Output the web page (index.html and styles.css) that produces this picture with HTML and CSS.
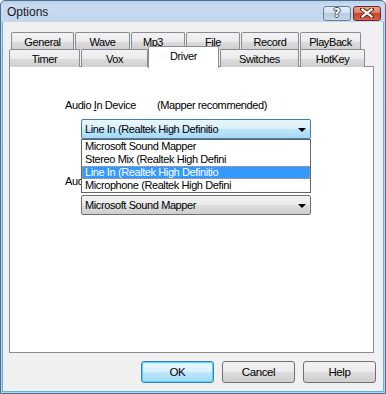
FILE: index.html
```html
<!DOCTYPE html>
<html>
<head>
<meta charset="utf-8">
<link rel="stylesheet" href="styles.css">
</head>
<body>
<div class="window">
  <div class="titlebar">
    <span class="title">Options</span>
    <div class="tb-buttons">
      <div class="tb-btn tb-help"><span class="q">?</span></div>
      <div class="tb-btn tb-close">
        <svg width="14" height="10" viewBox="0 0 14 10">
          <path d="M2 1 L12 9 M12 1 L2 9" stroke="#5a2a20" stroke-width="4" stroke-linecap="square"/>
          <path d="M2.5 1.5 L11.5 8.5 M11.5 1.5 L2.5 8.5" stroke="#ffffff" stroke-width="2.2" stroke-linecap="square"/>
        </svg>
      </div>
    </div>
  </div>
  <div class="client">
    <div class="tabs">
      <div class="tabrow back">
        <div class="tab w-general">General</div>
        <div class="tab w-wave">Wave</div>
        <div class="tab w-mp3">Mp3</div>
        <div class="tab w-file">File</div>
        <div class="tab w-record">Record</div>
        <div class="tab w-playback">PlayBack</div>
      </div>
      <div class="tabrow front">
        <div class="tab w-timer">Timer</div>
        <div class="tab w-vox">Vox</div>
        <div class="tab selected w-driver">Driver</div>
        <div class="tab w-switches">Switches</div>
        <div class="tab w-hotkey">HotKey</div>
      </div>
    </div>
    <div class="panel">
      <div class="field">
        <div class="label"><span class="lbl-main">Audio <u>I</u>n Device</span><span class="hint">(Mapper recommended)</span></div>
        <div class="combo-wrap">
          <div class="combo hot"><span class="combo-text">Line In (Realtek High Definitio</span><span class="arrow"></span></div>
          <ul class="dropdown">
            <li>Microsoft Sound Mapper</li>
            <li>Stereo Mix (Realtek High Defini</li>
            <li class="sel">Line In (Realtek High Definitio</li>
            <li>Microphone (Realtek High Defini</li>
          </ul>
        </div>
      </div>
      <div class="field second">
        <div class="label"><span class="lbl-main">Audio <u>O</u>ut Device</span></div>
        <div class="combo-wrap">
          <div class="combo"><span class="combo-text">Microsoft Sound Mapper</span><span class="arrow"></span></div>
        </div>
      </div>
    </div>
    <div class="buttons">
      <div class="btn default">OK</div>
      <div class="btn">Cancel</div>
      <div class="btn">Help</div>
    </div>
  </div>
</div>
</body>
</html>
```

FILE: styles.css
```css
html, body {
  margin: 0;
  padding: 0;
  background: #ffffff;
}
body {
  width: 386px;
  height: 394px;
  overflow: hidden;
  font-family: "Liberation Sans", Arial, sans-serif;
  font-size: 11px;
  letter-spacing: -0.4px;
  color: #000000;
}
.window {
  width: 386px;
  height: 394px;
  box-sizing: border-box;
  border: 1px solid #4d6f8c;
  border-radius: 5px 5px 0 0;
  padding: 0 1px 1px 1px;
  background: linear-gradient(#b9d0ea 0px, #c8dbf1 4px, #c2d6ee 21px, #b8d2ee 100%);
  display: flex;
  flex-direction: column;
}
.titlebar {
  height: 21px;
  display: flex;
  align-items: center;
  padding-left: 5px;
  flex-shrink: 0;
}
.title {
  font-family: "Liberation Sans", Arial, sans-serif;
  font-size: 12px;
  letter-spacing: 0;
  color: #1a1a1a;
  margin-top: 1px;
}
.tb-buttons {
  margin-left: auto;
  display: flex;
  gap: 2px;
  margin-right: 3px;
  margin-top: 3px;
}
.tb-btn {
  width: 26px;
  height: 13px;
  border: 1px solid #6a7f96;
  border-radius: 3px;
  display: flex;
  align-items: center;
  justify-content: center;
}
.tb-help {
  background: linear-gradient(#e4edf7 0%, #d3e0ee 45%, #b9cbe0 50%, #c8d8ea 100%);
}
.tb-help .q {
  font-family: "DejaVu Sans", sans-serif;
  font-weight: bold;
  font-size: 12px;
  letter-spacing: 0;
  color: #ffffff;
  line-height: 12px;
  text-shadow: 1px 0 0 #3f4e5e, -1px 0 0 #3f4e5e, 0 1px 0 #3f4e5e, 0 -1px 0 #3f4e5e;
}
.tb-close {
  border-color: #6b2a22;
  background: linear-gradient(#eba38f 0%, #de7a63 45%, #c9442c 50%, #d8614a 100%);
}
.client {
  flex: 1;
  background: #f0f0f0;
  border: 1px solid #5cb3ea;
  border-top: none;
  padding: 10px 6px 0 6px;
  display: flex;
  flex-direction: column;
}
.tabs {
  height: 35px;
  margin-bottom: -1px;
  display: flex;
  flex-direction: column;
  position: relative;
  z-index: 1;
}
.tabrow {
  display: flex;
}
.tabrow.back {
  padding-left: 2px;
  height: 18px;
}
.tabrow.front {
  height: 18px;
  margin-top: -1px;
}
.tab {
  box-sizing: border-box;
  height: 18px;
  border: 1px solid #898c95;
  border-bottom: none;
  border-radius: 2px 2px 0 0;
  background: linear-gradient(#f2f2f2 0%, #ebebeb 50%, #dddddd 51%, #cfcfcf 100%);
  display: flex;
  align-items: center;
  justify-content: center;
  padding-top: 1px;
  color: #000000;
  margin-right: 1px;
}
.tab.selected {
  height: 22px;
  margin-top: -3px;
  background: #ffffff;
  padding-bottom: 4px;
  position: relative;
  z-index: 2;
}
.w-general { width: 63px; }
.w-wave { width: 55px; }
.w-mp3 { width: 54px; padding-right: 10px; }
.w-file { width: 54px; }
.w-record { width: 58px; }
.w-playback { width: 61px; }
.w-timer { width: 71px; }
.w-vox { width: 67px; margin-right: 0; }
.w-driver { width: 71px; margin-right: 1px; }
.w-switches { width: 79px; }
.w-hotkey { width: 65px; }
.panel {
  width: 365px;
  height: 287px;
  box-sizing: border-box;
  border: 1px solid #898c95;
  background: #ffffff;
  padding: 32px 0 0 55px;
  flex-shrink: 0;
}
.field {
  display: flex;
  flex-direction: column;
}
.field.second {
  margin-top: 36px;
}
.label {
  height: 13px;
  line-height: 13px;
  display: flex;
  color: #000000;
}
.lbl-main {
  width: 92px;
}
.combo-wrap {
  position: relative;
  margin-top: 7px;
  margin-left: 16px;
  width: 230px;
}
.combo {
  box-sizing: border-box;
  height: 20px;
  border: 1px solid #707070;
  border-radius: 2px;
  background: linear-gradient(#f2f2f2 0%, #ebebeb 50%, #dddddd 51%, #cfcfcf 100%);
  display: flex;
  align-items: center;
  padding-left: 3px;
}
.combo.hot {
  border-color: #3c7fb1;
  background: linear-gradient(#eaf6fd 0%, #d9f0fc 50%, #bee6fd 51%, #a7d9f5 100%);
}
.combo-text {
  flex: 1;
  white-space: nowrap;
  overflow: hidden;
}
.arrow {
  width: 0;
  height: 0;
  border-left: 4px solid transparent;
  border-right: 4px solid transparent;
  border-top: 4px solid #000000;
  margin-right: 4px;
  margin-top: 1px;
}
.dropdown {
  position: absolute;
  left: 0;
  top: 20px;
  width: 230px;
  box-sizing: border-box;
  margin: 0;
  padding: 0;
  list-style: none;
  background: #ffffff;
  border: 1px solid #646464;
  z-index: 5;
}
.dropdown li {
  height: 13px;
  line-height: 13px;
  padding-left: 3px;
  white-space: nowrap;
  box-sizing: border-box;
}
.dropdown li.sel {
  background: #3399ff;
  color: #ffffff;
  outline: 1px dotted #e39a4d;
  outline-offset: -1px;
}
.buttons {
  display: flex;
  justify-content: flex-end;
  gap: 8px;
  margin-top: 8px;
  padding-right: 1px;
}
.btn {
  box-sizing: border-box;
  width: 73px;
  height: 22px;
  border: 1px solid #707070;
  border-radius: 3px;
  background: linear-gradient(#f2f2f2 0%, #ebebeb 50%, #dddddd 51%, #cfcfcf 100%);
  display: flex;
  align-items: center;
  justify-content: center;
  font-size: 11.5px;
  color: #000000;
}
.btn.default {
  border-color: #3c7fb1;
  box-shadow: inset 0 0 0 1px #48d8fb;
  background: linear-gradient(#eaf6fd 0%, #d9f0fc 50%, #bee6fd 51%, #a7d9f5 100%);
}
```
